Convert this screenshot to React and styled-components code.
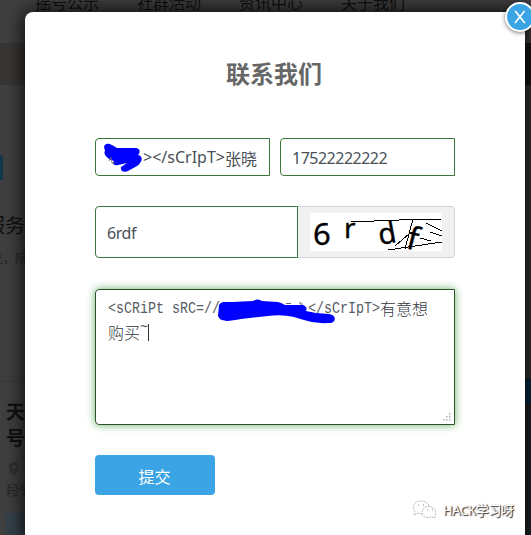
import React from "react";
import styled, { createGlobalStyle } from "styled-components";

const GlobalStyle = createGlobalStyle`
  * { box-sizing: border-box; }
  body { margin: 0; overflow: hidden; background: #3f3f3f; font-family: "Noto Sans", "Noto Sans CJK SC", sans-serif; font-size: 16px; }
`;
const Screen = styled.div`
  position: relative;
  width: 531px;
  height: 535px;
  overflow: hidden;
  background: #3f3f3f;
  color: #111;
`;
const Page = styled.div`
  display: flex;
  flex-direction: column;
  height: 100%;
`;
const Nav = styled.nav`
  display: flex;
  gap: 38px;
  height: 43px;
  padding-left: 35px;
  line-height: 24px;
  white-space: nowrap;
`;
const NavItem = styled.span`
  height: 24px;
  margin-top: -9px;
  color: #101010;
`;
const Banner = styled.div`
  height: 42px;
  background: linear-gradient(90deg, #383634 50%, #171512 50%);
`;
const Content = styled.div`
  display: flex;
  justify-content: space-between;
  height: 450px;
`;
const LeftCopy = styled.div`
  display: flex;
  flex-direction: column;
  width: 31px;
  overflow: hidden;
  white-space: nowrap;
`;
const Logo = styled.div`
  width: 3px;
  height: 26px;
  margin-top: 70px;
  border-radius: 0 2px 0 0;
  background: #12384c;
`;
const Service = styled.div`
  margin: 31px 0 0 -15px;
  font-size: 20px;
  line-height: 30px;
  color: #101010;
`;
const Note = styled.div`
  margin: 9px 0 0 -9px;
  font-size: 12px;
  line-height: 18px;
  color: #27211d;
`;
const Listing = styled.div`
  margin-top: 113px;
  padding: 17px 0 0 6px;
  border-top: 1px solid #393939;
  font-size: 19px;
  font-weight: 700;
  line-height: 26px;
`;
const Place = styled.div`
  padding: 11px 0 0 6px;
  color: #262626;
  font-size: 14px;
  line-height: 22px;
  svg { display: block; margin: 0 0 3px 2px; }
`;
const Tag = styled.div`
  flex: none;
  height: 22px;
  margin: 12px 0 0 6px;
  background: #35414a;
`;
const RightEdge = styled.div`
  width: 10px;
  padding-top: 293px;
  background: #353535;
`;
const BluePanel = styled.div`
  height: 26px;
  background: #092a40;
`;
const DarkPanel = styled.div`
  height: 131px;
  background: #20242b;
`;
const Modal = styled.section`
  position: absolute;
  top: 12px;
  left: 25px;
  width: 500px;
  height: 540px;
  padding: 43px 70px 0;
  border-radius: 8px;
  background: #fff;
  box-shadow: 0 0 20px #000;
`;
const Title = styled.h1`
  height: 36px;
  margin: 0 1px 0 -1px;
  color: #666;
  font: 700 24px/36px "Noto Sans CJK SC", sans-serif;
  text-align: center;
`;
const Close = styled.button`
  position: absolute;
  top: -10px;
  left: 480px;
  display: grid;
  place-items: center;
  width: 30px;
  height: 30px;
  padding: 0;
  border: 2px solid #fff;
  border-radius: 50%;
  background: #3ba4e4;
  box-shadow: 0 1px 4px #0008;
  svg { display: block; }
`;
const Fields = styled.div`
  display: flex;
  gap: 10px;
  margin-top: 47px;
`;
const Field = styled.div`
  position: relative;
  display: flex;
  align-items: center;
  width: ${({ $width }) => $width}px;
  height: ${({ $height }) => $height}px;
  padding: 1px 12px 0 11px;
  overflow: hidden;
  border: 1px solid #3c763d;
  border-radius: 4px 0 0 4px;
  color: #495057;
  font-size: 16px;
  letter-spacing: ${({ $spacing }) => $spacing || "-0.5px"};
  white-space: nowrap;
`;
const NameValue = styled.span`
  display: flex;
  justify-content: flex-end;
  width: 151px;
  letter-spacing: 0;
`;
const Latin = styled.span`
  font-size: 16px;
`;
const Scribble = styled.svg`
  position: absolute;
  top: ${({ $top }) => $top}px;
  left: ${({ $left }) => $left}px;
  fill: #00f;
`;
const CaptchaRow = styled.div`
  display: flex;
  margin-top: 30px;
`;
const Captcha = styled.div`
  display: flex;
  align-items: center;
  width: 157px;
  height: 52px;
  padding-left: 12px;
  border: 1px solid #ced4da;
  border-left: 0;
  border-radius: 0 4px 4px 0;
  background: #f1f1f1;
  svg { display: block; background: #fff; }
`;
const Message = styled.div`
  position: relative;
  height: 136px;
  margin-top: 31px;
  padding: 6px 12px;
  border: 1px solid #2b542c;
  border-radius: 4px 0 0 4px;
  box-shadow: 0 0 8px #67b168;
  color: #33383d;
  font: 300 16px/24px "Noto Sans CJK SC", sans-serif;
`;
const MessageLine = styled.div`
  display: flex;
  height: 24px;
`;
const Code = styled.span`
  flex: none;
  width: ${({ $width }) => $width}px;
  color: #565c63;
  font-family: "Liberation Mono", monospace;
  white-space: pre;
  transform: translateY(${({ $lift }) => ($lift ? -4 : 1)}px) scale(.8333, 1.06);
  transform-origin: left;
`;
const Caret = styled.span`
  width: 1px;
  height: 17px;
  margin-top: 4px;
  background: #333;
`;
const Grip = styled.svg`
  position: absolute;
  right: 2px;
  bottom: 1px;
`;
const Submit = styled.button`
  display: block;
  width: 120px;
  height: 40px;
  margin-top: 30px;
  padding: 2px 1px 0 0;
  border: 0;
  border-radius: 4px;
  background: #3ba4e4;
  color: #fff;
  font: 16px/24px "Noto Sans CJK SC", sans-serif;
`;
const Watermark = styled.div`
  position: absolute;
  top: 498px;
  left: 413px;
  display: flex;
  align-items: center;
  gap: 6px;
  color: #fff;
  font: 12.8px/24px "Noto Sans", "Noto Sans CJK SC", sans-serif;
  letter-spacing: -0.15px;
  text-shadow: 1px 1px 1px #333, 1px 0 1px #666;
  white-space: nowrap;
`;

const captchaLines = "M41 9 64 8 89 7 132 6M78 37 105 33 132 29M85 33 99 21M103 6 95 36M116 10 132 18M120 19 132 23M110 25 121 28";

export default function App() {
  return (
    <Screen>
      <GlobalStyle />
      <Page>
        <Nav>
          {["摇号公示", "社群活动", "资讯中心", "关于我们"].map((item) => <NavItem key={item}>{item}</NavItem>)}
        </Nav>
        <Banner />
        <Content>
          <LeftCopy>
            <Logo />
            <Service>服务</Service>
            <Note>吃，陪</Note>
            <Listing>天<br />号</Listing>
            <Place>
              <svg width="12" height="14" viewBox="0 0 12 14"><path fill="#303030" fillRule="evenodd" d="M6 0C2.5 0 1 2.2 1 5c0 3 2.7 6.5 5 9 2.3-2.5 5-6 5-9 0-2.8-1.5-5-5-5Zm0 3a2 2 0 1 1 0 4 2 2 0 0 1 0-4Z" /></svg>
              段9
            </Place>
            <Tag />
          </LeftCopy>
          <RightEdge><BluePanel /><DarkPanel /></RightEdge>
        </Content>
      </Page>
      <Modal>
        <Title>联系我们</Title>
        <Close aria-label="关闭">
          <svg width="14" height="14" viewBox="0 0 14 14"><path d="M2.2 1 11.8 13M11.5 1 2 13" fill="none" stroke="#fff" strokeWidth="1.7" /></svg>
        </Close>
        <Fields>
          <Field $width={175} $height={38}>
            <NameValue><Latin>&gt;&lt;/sCrIpT&gt;</Latin>张晓</NameValue>
            <Scribble $top={4} $left={8} width="40" height="31" viewBox="0 0 40 31">
              <path d="M0 4C1 0 4 0 8 2L13 5H32C37 6 36 10 34 12C40 13 38 20 33 23L24 28C20 30 16 28 17 24L23 20L14 22C9 23 8 20 10 18C3 16-1 11 1 8Z" />
              <path d="M5 18 7 14 8 20 12 20" fill="none" stroke="#666" strokeWidth=".8" />
            </Scribble>
          </Field>
          <Field $width={175} $height={38}>17522222222</Field>
        </Fields>
        <CaptchaRow>
          <Field $width={203} $height={52} $spacing="-0.45px">6rdf</Field>
          <Captcha>
            <svg width="132" height="38" viewBox="0 0 132 38">
              <g fill="#000" stroke="#000" strokeWidth=".35" fontFamily="Noto Sans, sans-serif">
                <text x="3" y="32" fontSize="31">6</text>
                <text x="34" y="25" fontSize="28">r</text>
                <text x="70" y="32" fontSize="29" transform="rotate(-10 70 32)">d</text>
                <text x="95" y="35" fontSize="32" transform="rotate(14 95 35)">f</text>
              </g>
              <path d={captchaLines} fill="none" stroke="#000" strokeWidth="1" shapeRendering="crispEdges" />
            </svg>
          </Captcha>
        </CaptchaRow>
        <Message>
          <MessageLine>
            <Code $width={200}>&lt;sCRiPt sRC=//</Code>
            <Code $width={72}>&lt;/sCrIpT&gt;</Code>有意想
          </MessageLine>
          <MessageLine>购买<Code $width={8} $lift>~</Code><Caret /></MessageLine>
          <Scribble $top={9} $left={121} width="120" height="26" viewBox="0 0 120 26">
            <path d="M2 6C4 2 8 3 15 3L36 2Q41-1 45 2L61 3Q65 4 68 6L86 6Q91 8 89 12L99 14 112 15C120 16 119 24 113 24C98 25 86 21 77 18Q65 15 51 17L24 20C12 22 4 24 1 17Z" />
            <path d="M69 4.5h5M83 3v2h3" fill="none" stroke="#666" />
          </Scribble>
          <Grip width="10" height="10" viewBox="0 0 10 10"><path fill="#b5b5b5" d="M7 0h1.5v1.5H7zM4 3h1.5v1.5H4zM7 3h1.5v1.5H7zM1 6h1.5v1.5H1zM4 6h1.5v1.5H4zM7 6h1.5v1.5H7z" /></Grip>
        </Message>
        <Submit>提交</Submit>
      </Modal>
      <Watermark>
        <svg width="24" height="20" viewBox="0 0 24 20" fill="none" stroke="#999" strokeWidth=".7" strokeDasharray="2 1">
          <path d="M9 14 5 13 1 15 2 11C-1 8 0 3 5 1.5S15 2 16 6" />
          <path d="M18 17C13 19 9 16 9 12s4-6 8-5.5S24 11 22 15v3l-2-1Z" />
          <path d="M5 5h1m4 0h1m3 5h1m4 0h1" strokeDasharray="none" stroke="#555" />
        </svg>
        HACK学习呀
      </Watermark>
    </Screen>
  );
}
